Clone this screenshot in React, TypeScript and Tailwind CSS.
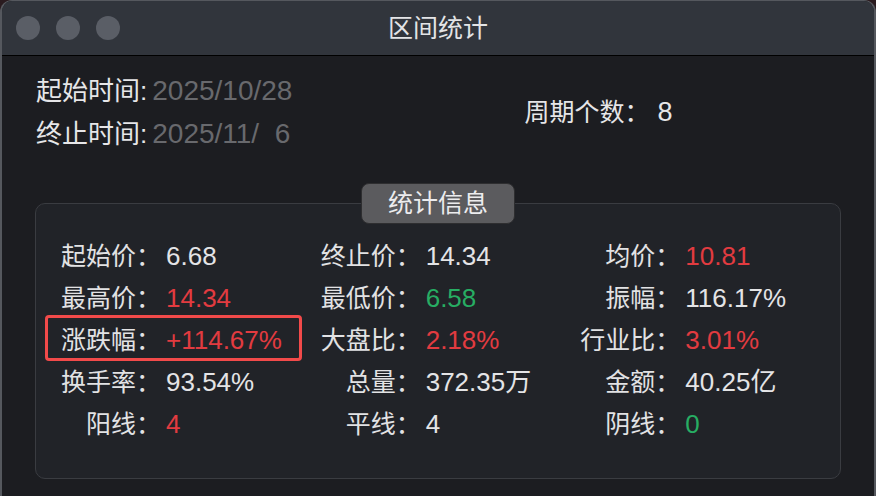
import React from "react";

type Cell = { label: string; value: string; color?: "red" | "green" | "white" };

const rows: Cell[][] = [
  [
    { label: "起始价：", value: "6.68" },
    { label: "终止价：", value: "14.34" },
    { label: "均价：", value: "10.81", color: "red" },
  ],
  [
    { label: "最高价：", value: "14.34", color: "red" },
    { label: "最低价：", value: "6.58", color: "green" },
    { label: "振幅：", value: "116.17%" },
  ],
  [
    { label: "涨跌幅：", value: "+114.67%", color: "red" },
    { label: "大盘比：", value: "2.18%", color: "red" },
    { label: "行业比：", value: "3.01%", color: "red" },
  ],
  [
    { label: "换手率：", value: "93.54%" },
    { label: "总量：", value: "372.35万" },
    { label: "金额：", value: "40.25亿" },
  ],
  [
    { label: "阳线：", value: "4", color: "red" },
    { label: "平线：", value: "4" },
    { label: "阴线：", value: "0", color: "green" },
  ],
];

function valueClass(c?: Cell["color"]) {
  if (c === "red") return "text-[#e23b40]";
  if (c === "green") return "text-[#27ad63]";
  return "text-[#e4e4e6]";
}

export default function App() {
  const font = { fontFamily: '"Liberation Sans", "Noto Sans CJK SC", sans-serif' };
  return (
    <div className="w-[876px] h-[496px] bg-[#2a1b1f] overflow-hidden" style={font}>
      <div className="w-full h-full rounded-t-[12px] border-x-2 border-t border-[#55585e] bg-[#1c1d21] flex flex-col overflow-hidden">
        {/* title bar */}
        <div className="relative h-[55px] shrink-0 bg-[#31353c] border-b border-black flex items-center justify-center">
          <div className="absolute left-[14px] top-1/2 -translate-y-1/2 flex gap-[16px]">
            <div className="w-[24px] h-[24px] rounded-full bg-[#5a5e66]" />
            <div className="w-[24px] h-[24px] rounded-full bg-[#5a5e66]" />
            <div className="w-[24px] h-[24px] rounded-full bg-[#5a5e66]" />
          </div>
          <div className="text-[25px] text-[#e3e4e6] leading-none">区间统计</div>
        </div>

        {/* top section */}
        <div className="flex pl-[34px] pt-[19px]">
          <div className="flex flex-col gap-[11px] leading-[32px]">
            <div className="flex items-baseline">
              <span className="text-[26px] text-[#e6e6e8]">起始时间:</span>
              <span className="ml-[5px] text-[28px] text-[#68696d]">2025/10/28</span>
            </div>
            <div className="flex items-baseline">
              <span className="text-[26px] text-[#e6e6e8]">终止时间:</span>
              <span className="ml-[5px] text-[28px] text-[#68696d] whitespace-pre">2025/11/  6</span>
            </div>
          </div>
          <div className="ml-[232px] self-center flex items-baseline text-[#e6e6e8]">
            <span className="text-[25px]">周期个数：</span>
            <span className="ml-[8px] text-[27px]">8</span>
          </div>
        </div>

        {/* group box */}
        <div className="relative ml-[33px] mt-[53px] w-[806px] h-[276px] rounded-[10px] border border-[#3a3c41] bg-[#212328] pt-[31px] pl-[25px]">
          <div className="absolute left-1/2 -translate-x-1/2 -top-[21px] w-[154px] h-[41px] rounded-[8px] border border-[#2e2e30] bg-[#5b5b5e] flex items-center justify-center text-[25px] text-[#ececee]">
            统计信息
          </div>
          <div className="flex flex-col">
            {rows.map((row, ri) => (
              <div key={ri} className="flex h-[42px] items-center">
                {row.map((cell, ci) => (
                  <div key={ci} className="w-[260px] flex items-baseline">
                    <span className="w-[100px] text-right text-[25px] text-[#e2e2e4]">{cell.label}</span>
                    <span className={"ml-[5px] text-[26px] " + valueClass(cell.color)}>{cell.value}</span>
                  </div>
                ))}
              </div>
            ))}
          </div>
          {/* highlight annotation */}
          <div className="absolute left-[9px] top-[111px] w-[257px] h-[46px] rounded-[4px] border-[3px] border-[#f24a4a]" />
        </div>
      </div>
    </div>
  );
}
